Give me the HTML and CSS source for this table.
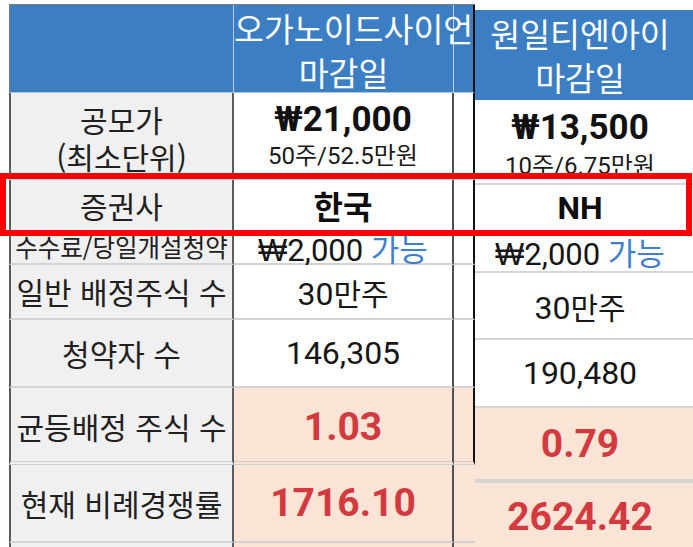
FILE: index.html
```html
<!DOCTYPE html>
<html lang="ko">
<head>
<meta charset="utf-8">
<title>공모주 청약 비교</title>
<link rel="stylesheet" href="styles.css">
</head>
<body>
<div class="page">
  <div class="sheet">
    <div class="cell hd hd-lab"></div>
    <div class="cell hd hd-mid"><div>오가노이드사이언</div><div>마감일</div></div>
    <div class="cell hd hd-end"></div>

    <div class="cell lab two"><span>공모가</span><span>(최소단위)</span></div>
    <div class="cell mid two"><span class="price">₩21,000</span><span class="unit">50주/52.5만원</span></div>
    <div class="cell end"></div>

    <div class="cell lab">증권사</div>
    <div class="cell mid"><span class="broker">한국</span></div>
    <div class="cell end"></div>

    <div class="cell lab small">수수료/당일개설청약</div>
    <div class="cell mid fee"><span><span class="won">₩</span>2,000 <span class="ok">가능</span></span></div>
    <div class="cell end"></div>

    <div class="cell lab">일반 배정주식 수</div>
    <div class="cell mid"><span>30<span class="kr">만주</span></span></div>
    <div class="cell end"></div>

    <div class="cell lab">청약자 수</div>
    <div class="cell mid">146,305</div>
    <div class="cell end"></div>

    <div class="cell lab eq-row">균등배정 주식 수</div>
    <div class="cell mid peach eq-row"><span class="red">1.03</span></div>
    <div class="cell end peach eq-row"></div>

    <div class="cell lab">현재 비례경쟁률</div>
    <div class="cell mid peach"><span class="red">1716.10</span></div>
    <div class="cell end peach open"></div>

    <div class="cell lab"></div>
    <div class="cell mid peach"></div>
    <div class="cell end peach open"></div>
  </div>

  <div class="side">
    <div class="s-row s-hd"><div>원일티엔아이</div><div>마감일</div></div>
    <div class="s-row s-price"><span class="price">₩13,500</span><span class="unit">10주/6.75만원</span></div>
    <div class="s-row s-nh"><span class="nh">NH</span></div>
    <div class="s-row s-fee"><span><span class="won">₩</span>2,000 <span class="ok">가능</span></span></div>
    <div class="s-row s-shares"><span>30<span class="kr">만주</span></span></div>
    <div class="s-row s-apps">190,480</div>
    <div class="s-row s-eq"><span class="red">0.79</span></div>
    <div class="s-bar"></div>
    <div class="s-row s-rate"><span class="red">2624.42</span></div>
  </div>

  <div class="highlight"></div>
</div>
</body>
</html>
```

FILE: styles.css
```css
* {
  box-sizing: border-box;
  margin: 0;
  padding: 0;
}

html,
body {
  width: 693px;
  height: 547px;
  overflow: hidden;
  background: #ffffff;
}

body {
  font-family: "Noto Sans CJK KR", "Noto Sans", sans-serif;
  color: #1a1a1a;
}

.page {
  position: relative;
  display: flex;
  align-items: flex-start;
  width: 693px;
  height: 547px;
  overflow: hidden;
}

/* ---------- left sheet ---------- */
.sheet {
  flex: none;
  margin-left: 9px;
  margin-top: 4px;
  border-top: 1px solid #7d7d7d;
  display: grid;
  grid-template-columns: 225px 220px 21px;
  grid-template-rows: 88px 87px 52px 33px 55px 68px 77px 78px 40px;
}

.cell {
  display: flex;
  flex-direction: column;
  justify-content: center;
  align-items: center;
  text-align: center;
  white-space: nowrap;
  background: #ffffff;
  border-bottom: 2px solid #d3d3d3;
}

.lab {
  background: #f0f0f0;
  border-left: 2px solid #5c5c5c;
  border-right: 2px solid #5c5c5c;
  font-size: 30px;
  line-height: 37px;
  color: #202020;
}

.lab.small {
  font-size: 24.5px;
  padding-bottom: 2px;
}

.mid {
  border-right: 2px solid #505050;
  font-family: Roboto, "Noto Sans", "Noto Sans CJK KR", sans-serif;
  font-size: 32px;
  color: #161616;
}

.fee {
  font-size: 31px;
}

.won {
  font-family: "Liberation Sans", "DejaVu Sans", sans-serif;
  font-weight: 400;
}

.kr {
  font-family: "Noto Sans CJK KR", sans-serif;
  font-size: 30px;
}

.end {
  border-right: 2px solid #111111;
}

.end.open {
  border-right: none;
}

.two {
  padding-top: 4px;
}

.two span {
  display: block;
  line-height: 37px;
}

.peach {
  background: #fae4d6;
}

.eq-row {
  border-bottom: 4px double #cfcfcf;
  padding-top: 4px;
}

/* header */
.hd {
  background: #3c7ec4;
  color: #ffffff;
  border-bottom: 1px solid #b3c7df;
}

.hd-lab {
  border-left: 2px solid #5d7fa6;
  border-right: 1px solid #b9cce4;
}

.hd-mid {
  align-items: stretch;
  z-index: 1;
  padding-top: 3px;
  font-size: 32.5px;
  line-height: 44px;
  border-right: 1px solid #c4d5ea;
}

.hd-mid div {
  text-align: center;
  white-space: nowrap;
}

.hd-end {
  border-right: 2px solid #111111;
}

/* value text */
.price {
  font-family: Roboto, "Noto Sans", "Noto Sans CJK KR", sans-serif;
  font-weight: 700;
  font-size: 35px;
  color: #111111;
}

.unit {
  font-family: Roboto, "Noto Sans", "Noto Sans CJK KR", sans-serif;
  font-size: 24px;
  color: #1a1a1a;
}

.broker {
  font-family: "Noto Sans CJK KR", sans-serif;
  font-weight: 700;
  font-size: 32px;
  color: #0d0d0d;
}

.nh {
  font-family: Roboto, sans-serif;
  font-weight: 700;
  font-size: 32px;
  color: #0d0d0d;
}

.ok {
  font-family: "Noto Sans CJK KR", sans-serif;
  color: #3f7fd0;
}

.red {
  font-family: Roboto, sans-serif;
  font-weight: 700;
  font-size: 39px;
  color: #d33a3f;
}

/* ---------- right column ---------- */
.side {
  flex: none;
  width: 218px;
  padding-top: 10px;
  display: flex;
  flex-direction: column;
}

.s-row {
  display: flex;
  flex-direction: column;
  justify-content: center;
  align-items: center;
  padding-right: 8px;
  white-space: nowrap;
  font-family: Roboto, "Noto Sans", "Noto Sans CJK KR", sans-serif;
  font-size: 32px;
  color: #161616;
}

.s-hd {
  height: 90px;
  background: #3c7ec4;
  color: #ffffff;
  font-family: "Noto Sans CJK KR", sans-serif;
  font-size: 32.5px;
  line-height: 44px;
}

.s-price {
  height: 85px;
  padding-top: 10px;
  border-bottom: 2px solid #d6d6d6;
}

.s-price span {
  display: block;
  line-height: 38px;
}

.s-nh {
  height: 46px;
}

.s-fee {
  height: 42px;
  font-size: 31px;
  border-bottom: 2px solid #d6d6d6;
}

.s-shares {
  height: 67px;
  border-bottom: 2px solid #d6d6d6;
}

.s-apps {
  height: 68px;
  border-bottom: 2px solid #d6d6d6;
}

.s-eq {
  height: 71px;
  background: #fae4d6;
}

.s-bar {
  height: 4px;
  background: #d6d3d1;
}

.s-rate {
  height: 68px;
  background: #fae4d6;
}

/* ---------- red highlight box ---------- */
.highlight {
  position: absolute;
  left: 0;
  top: 173px;
  width: 692px;
  height: 63px;
  border: 6px solid #ff0000;
}
```
